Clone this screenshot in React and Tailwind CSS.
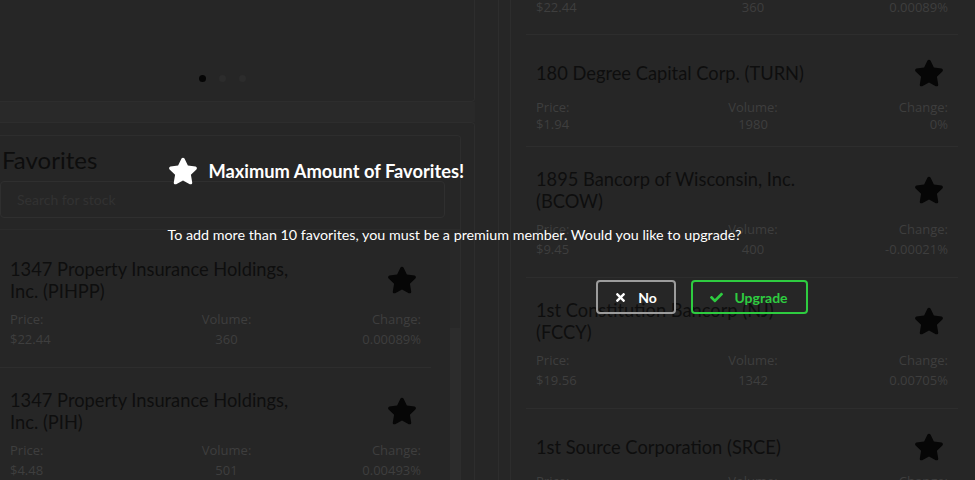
import { FaStar, FaTimes, FaCheck } from 'react-icons/fa';

const favorites = [
  { name: '1347 Property Insurance Holdings, Inc. (PIHPP)', price: '$22.44', volume: '360', change: '0.00089%' },
  { name: '1347 Property Insurance Holdings, Inc. (PIH)', price: '$4.48', volume: '501', change: '0.00493%' },
];

const stocks = [
  { name: '180 Degree Capital Corp. (TURN)', price: '$1.94', volume: '1980', change: '0%', compact: true },
  { name: '1895 Bancorp of Wisconsin, Inc. (BCOW)', price: '$9.45', volume: '400', change: '-0.00021%' },
  { name: '1st Constitution Bancorp (NJ) (FCCY)', price: '$19.56', volume: '1342', change: '0.00705%' },
  { name: '1st Source Corporation (SRCE)', price: '$44.30', volume: '2210', change: '0.00312%' },
];

const statText = "text-[13px] leading-[20px] text-[#3e3e3e] font-['Open_Sans',sans-serif]";

function StatValues({ price, volume, change }) {
  return (
    <div className={`grid grid-cols-3 ${statText}`}>
      <div>{price}</div>
      <div className="pl-[22px] text-center">{volume}</div>
      <div className="text-right">{change}</div>
    </div>
  );
}

function StockItem({ stock }) {
  return (
    <div className={`px-[10px] pt-[21px] ${stock.compact ? 'pb-[12px]' : 'pb-[18px]'} border-b border-[#2d2d2d]`}>
      <div className="flex items-center justify-between min-h-[34px]">
        <div className="w-[292px] text-[18.3px] leading-[22px] text-[#0e0e0e] font-['Lato',sans-serif]">{stock.name}</div>
        <FaStar className="w-[30px] h-[30px] mr-[4px] text-[#060606]" />
      </div>
      <div className={`mt-[7px] grid grid-cols-3 ${statText}`}>
        <div>
          <div>Price:</div>
          <div className={stock.compact ? '-mt-[3px]' : ''}>{stock.price}</div>
        </div>
        <div className="pl-[22px] text-center">
          <div>Volume:</div>
          <div className={stock.compact ? '-mt-[3px]' : ''}>{stock.volume}</div>
        </div>
        <div className="text-right pr-[-2px]">
          <div>Change:</div>
          <div className={stock.compact ? '-mt-[3px]' : ''}>{stock.change}</div>
        </div>
      </div>
    </div>
  );
}

export default function App() {
  return (
    <div className="relative h-[480px] overflow-hidden bg-[#262626] font-['Lato',sans-serif]">
      <div className="flex h-full">
        {/* left column */}
        <div className="w-[475px] shrink-0 flex flex-col">
          <div className="h-[102px] shrink-0 flex items-end pl-[199px] pb-[19px] border-r border-b border-[#2d2d2d] rounded-br-[4px]">
            <div className="flex gap-[13px]">
              <span className="w-[7px] h-[7px] rounded-full bg-[#050505]" />
              <span className="w-[7px] h-[7px] rounded-full bg-[#2c2c2c]" />
              <span className="w-[7px] h-[7px] rounded-full bg-[#2c2c2c]" />
            </div>
          </div>
          <div className="h-[20px] shrink-0 bg-[#292929]" />
          <div className="flex-1 min-h-0 border-t border-r border-[#2d2d2d] rounded-tr-[4px] pt-[12px] pr-[13px]">
            <div className="h-full border-t border-r border-[#2d2d2d] rounded-tr-[4px] pr-[15px]">
              <h2 className="pl-[2px] pt-[10px] text-[24px] leading-[28px] text-[#0d0d0d]">Favorites</h2>
              <div className="mt-[7px] h-[37px] flex items-center pl-[16px] border border-[#2f2f2f] rounded-[4px] text-[14px] text-[#323232]">
                Search for stock
              </div>
              <div className="mt-[11px] flex border-t border-[#2b2b2b] mr-[-15px]">
                <div className="w-[452px] pr-[19px] pt-[7px]">
                  {favorites.map((s) => (
                    <StockItem key={s.name} stock={s} />
                  ))}
                </div>
                <div className="w-[10px] bg-[#282828] pt-[98px]">
                  <div className="h-[200px] bg-[#2c2c2c]" />
                </div>
              </div>
            </div>
          </div>
        </div>

        <div className="w-[23px] shrink-0" />
        <div className="w-[13px] shrink-0 border-l border-r border-[#2d2d2d]" />

        {/* right column */}
        <div className="flex-1 pl-[15px] pr-[17px]">
          <div className="-mt-[3px] px-[10px] pb-[17px] border-b border-[#2d2d2d]">
            <StatValues price="$22.44" volume="360" change="0.00089%" />
          </div>
          {stocks.map((s) => (
            <StockItem key={s.name} stock={s} />
          ))}
        </div>
      </div>

      {/* modal */}
      <div className="absolute inset-0 flex justify-center pt-[154px]">
        <div className="w-[640px] flex flex-col">
          <div className="flex items-center gap-[11px] h-[34px]">
            <FaStar className="w-[30px] h-[30px] text-white" />
            <span className="text-[18.3px] font-bold text-white leading-[24px]">Maximum Amount of Favorites!</span>
          </div>
          <p className="mt-[37px] text-[14.3px] leading-[20px] text-white">
            To add more than 10 favorites, you must be a premium member. Would you like to upgrade?
          </p>
          <div className="mt-[35px] flex justify-end gap-[15px]">
            <button className="h-[34px] w-[80px] flex items-center justify-center gap-[11px] border-2 border-[#9c9c9c] rounded-[4px] text-[14px] font-bold text-white">
              <FaTimes className="w-[13px] h-[13px]" />
              No
            </button>
            <button className="h-[34px] w-[117px] flex items-center justify-center gap-[11px] border-2 border-[#2ecc40] rounded-[4px] text-[14px] font-bold text-[#2ecc40]">
              <FaCheck className="w-[13px] h-[13px]" />
              Upgrade
            </button>
          </div>
        </div>
      </div>
    </div>
  );
}
